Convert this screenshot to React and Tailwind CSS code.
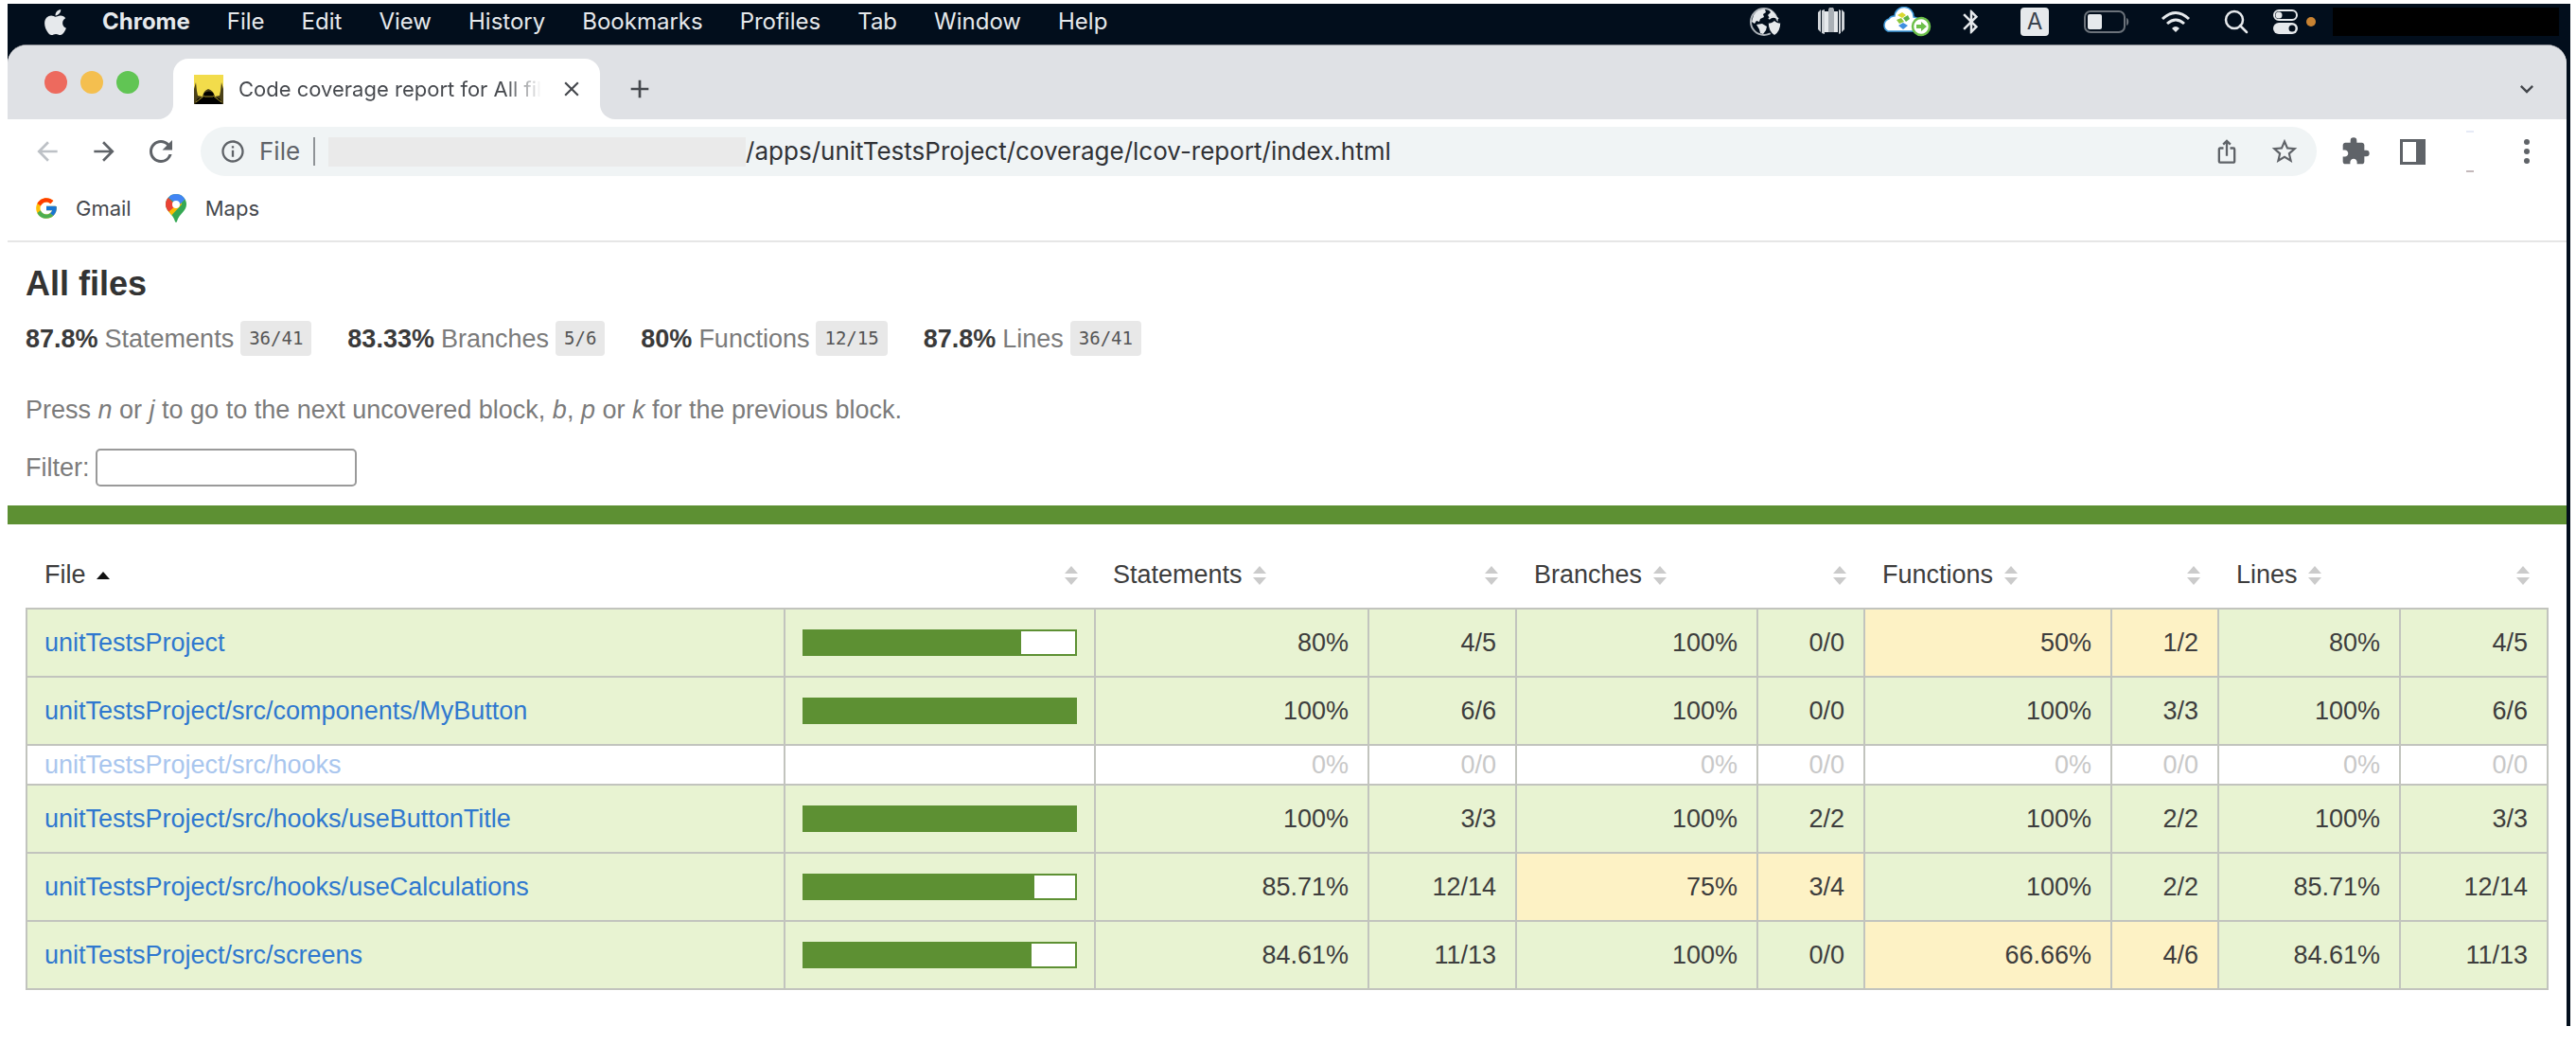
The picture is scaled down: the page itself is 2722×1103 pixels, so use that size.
import { FaApple } from "react-icons/fa";
import { MdArrowBack, MdArrowForward, MdRefresh, MdInfoOutline, MdClose, MdAdd, MdExtension, MdStarOutline, MdIosShare, MdKeyboardArrowDown, MdBluetooth } from "react-icons/md";
import { FcGoogle } from "react-icons/fc";

const MENUS = ["File", "Edit", "View", "History", "Bookmarks", "Profiles", "Tab", "Window", "Help"];

const SUMMARY = [
  ["87.8%", "Statements", "36/41"],
  ["83.33%", "Branches", "5/6"],
  ["80%", "Functions", "12/15"],
  ["87.8%", "Lines", "36/41"],
];

const COLUMNS = [
  { label: "Statements", pct: "w-[289px]", abs: "w-[156px]" },
  { label: "Branches", pct: "w-[255px]", abs: "w-[113px]" },
  { label: "Functions", pct: "w-[261px]", abs: "w-[113px]" },
  { label: "Lines", pct: "w-[192px]", abs: "w-[156px]" },
];

const ROWS = [
  { file: "unitTestsProject", pct: 80, cells: [["80%", "4/5"], ["100%", "0/0"], ["50%", "1/2", true], ["80%", "4/5"]] },
  { file: "unitTestsProject/src/components/MyButton", pct: 100, cells: [["100%", "6/6"], ["100%", "0/0"], ["100%", "3/3"], ["100%", "6/6"]] },
  { file: "unitTestsProject/src/hooks", empty: true, cells: [["0%", "0/0"], ["0%", "0/0"], ["0%", "0/0"], ["0%", "0/0"]] },
  { file: "unitTestsProject/src/hooks/useButtonTitle", pct: 100, cells: [["100%", "3/3"], ["100%", "2/2"], ["100%", "2/2"], ["100%", "3/3"]] },
  { file: "unitTestsProject/src/hooks/useCalculations", pct: 85, cells: [["85.71%", "12/14"], ["75%", "3/4", true], ["100%", "2/2"], ["85.71%", "12/14"]] },
  { file: "unitTestsProject/src/screens", pct: 84, cells: [["84.61%", "11/13"], ["100%", "0/0"], ["66.66%", "4/6", true], ["84.61%", "11/13"]] },
];

function Globe() {
  return (
    <svg viewBox="0 0 34 32" className="h-8 w-[34px] shrink-0">
      <circle cx="15" cy="16" r="14" fill="none" stroke="#aeb4ba" strokeWidth="2" />
      <path d="M4 9C7 4 12 2 16 3l1 3-3 2 1 3-4 2-1 3-3-1-2 3-3-2zM20 3c4 1 7 4 8 8l-4-1-3 2-2-3 3-3zM7 19l6-1 5 3-1 4-3 4-3-1-1-4z" fill="#e6e9ec" />
      <path d="M26 14c2 2 5 3 7 3 0 7-2 11-7 14-5-3-7-7-7-14 2 0 5-1 7-3z" fill="#e6e9ec" stroke="#020e1c" strokeWidth="1.5" />
      <path d="M20 13c3-3 7-3 10 0" fill="none" stroke="#e6e9ec" strokeWidth="2" />
    </svg>
  );
}

function Stripes() {
  return (
    <svg viewBox="0 0 28 32" className="h-8 w-7 shrink-0">
      <path d="M0 6l3-3v24l-3-3zM4 4l3-1v26l-3-1zM22 3l2 1v24l-2 1zM25 3l3 3v18l-3 3z" fill="#cfd3d7" />
      <path d="M7 5h4v22H7zM17 5h4v22h-4z" fill="#e6e9ec" />
      <path d="M11 3l1-2h4l1 2v24h-6z" fill="#aab0b6" />
    </svg>
  );
}

function Cloud() {
  return (
    <svg viewBox="0 0 54 32" className="h-8 w-[54px] shrink-0">
      <path d="M8 26a7 7 0 0 1 1-13 6 6 0 0 1 6-3 10 10 0 0 1 20 1 8 8 0 0 1 3 15z" fill="#fff" stroke="#3f9bdc" strokeWidth="1.5" />
      <path d="M18 9l5-3 4 3-4 3z" fill="#d9d92f" />
      <path d="M24 12l5-3 2 4-4 3z" fill="#5db346" />
      <path d="M17 14l5-2 3 4-5 2z" fill="#8cc63f" />
      <path d="M19 20l5-3 5 3-5 4z" fill="#3f8fe0" />
      <circle cx="43" cy="21" r="9" fill="#fff" stroke="#6cc04a" strokeWidth="2.5" />
      <path d="M38 19h5v-3l6 5-6 5v-3h-5z" fill="#6cc04a" />
    </svg>
  );
}

function Battery() {
  return (
    <svg viewBox="0 0 48 24" className="h-6 w-12 shrink-0">
      <rect x="1" y="1" width="42" height="22" rx="6" fill="none" stroke="#6b727a" strokeWidth="2" />
      <rect x="4" y="4" width="15" height="16" rx="2" fill="#e6e9ec" />
      <path d="M45 8c3 1 3 7 0 8z" fill="#6b727a" />
    </svg>
  );
}

function WifiIcon() {
  return (
    <svg viewBox="0 0 32 24" className="h-6 w-8 shrink-0" fill="none" stroke="#e6e9ec" strokeWidth="3">
      <path d="M2 9Q16-4 30 9M7 14q9-8 18 0" />
      <path d="M12 19q4-4 8 0l-4 4z" fill="#e6e9ec" stroke="none" />
    </svg>
  );
}

function Magnifier() {
  return (
    <svg viewBox="0 0 26 26" className="h-[26px] w-[26px] shrink-0" fill="none" stroke="#e6e9ec" strokeWidth="2.5">
      <circle cx="11" cy="11" r="9" />
      <path d="M17 17l7 7" strokeLinecap="round" />
    </svg>
  );
}

function ControlCenter() {
  return (
    <svg viewBox="0 0 28 28" className="h-7 w-7 shrink-0">
      <rect x="2" y="2" width="24" height="10" rx="5" fill="none" stroke="#e6e9ec" strokeWidth="2" />
      <circle cx="7" cy="7" r="3.500" fill="#e6e9ec" />
      <rect x="1" y="15" width="26" height="12" rx="6" fill="#e6e9ec" />
      <circle cx="21" cy="21" r="3.500" fill="#020e1c" />
    </svg>
  );
}

function Favicon() {
  return (
    <svg viewBox="0 0 31 31" className="h-[31px] w-[31px] shrink-0">
      <rect width="31" height="31" fill="#f2dc4b" />
      <path d="M0 31V15l2-7 1 9 1 5 5 1q1-6 6-8 6 2 7 8l5-1 1-5 1-9 2 7v16z" fill="#4a4018" />
      <path d="M1 31l3-6 5-1 2-5q5-3 9 0l2 5 5 1 3 6z" fill="#000" />
      <path d="M2 29l9-7M29 29l-9-7M11 23h9" stroke="#a08f2c" strokeWidth="1" />
    </svg>
  );
}

function MapsPin() {
  return (
    <svg viewBox="0 0 22 30" className="h-[30px] w-[22px] shrink-0">
      <defs>
        <clipPath id="pin">
          <path d="M11 0a11 11 0 0 1 11 11c0 7-8 10-10 18q-1 2-2 0C8 21 0 18 0 11A11 11 0 0 1 11 0z" />
        </clipPath>
      </defs>
      <g clipPath="url(#pin)">
        <rect width="22" height="30" fill="#34a853" />
        <path d="M0 18L15 3l2 8L4 25z" fill="#fbbc04" />
        <path d="M0 0L3 4l8 8-8 7-3-3z" fill="#ea4335" />
        <path d="M3 4L6 0h16v4l-8 8z" fill="#4285f4" />
      </g>
      <circle cx="11" cy="11" r="4" fill="#fff" />
    </svg>
  );
}

function Sorter({ active }) {
  return (
    <svg viewBox="0 0 14 20" className="inline-block h-5 w-[14px] align-[-2px]">
      {active ? <path d="M0 14l7-8 7 8z" fill="#111" /> : <path d="M0 8l7-8 7 8zM0 12h14l-7 8z" fill="#cbcbcb" />}
    </svg>
  );
}

function MenuBar() {
  return (
    <div className="flex h-[43px] items-center bg-[#020e1c] pr-3 pb-[5px] pl-[37px] text-[24px] text-[#e6e9ec]">
      <FaApple className="h-[31px] w-[27px] shrink-0" />
      <nav className="ml-[36px] flex gap-[39px] leading-7">
        <button type="button" className="font-bold">Chrome</button>
        {MENUS.map((m) => (
          <button type="button" key={m}>{m}</button>
        ))}
      </nav>
      <div className="ml-auto flex items-center">
        <Globe />
        <span className="ml-[38px] flex"><Stripes /></span>
        <span className="ml-[38px] flex"><Cloud /></span>
        <MdBluetooth className="ml-[27px] h-[30px] w-[30px]" />
        <span className="ml-[37px] flex h-[30px] w-[30px] items-center justify-center rounded-[4px] bg-[#e6e9ec] leading-none text-[#3a434e]">A</span>
        <span className="ml-[37px] flex"><Battery /></span>
        <span className="ml-[33px] flex"><WifiIcon /></span>
        <span className="ml-[35px] flex"><Magnifier /></span>
        <span className="ml-[25px] flex"><ControlCenter /></span>
        <span className="ml-2 h-[10px] w-[10px] rounded-full bg-[#c98332]" />
        <span className="ml-[18px] h-[30px] w-[239px] bg-black" />
      </div>
    </div>
  );
}

function TabStrip() {
  return (
    <div className="flex h-[78px] items-end bg-[#dfe1e5] pl-[39px]">
      <div className="flex h-full items-center gap-[14px]">
        <span className="h-6 w-6 rounded-full bg-[#ed6a5e]" />
        <span className="h-6 w-6 rounded-full bg-[#f4bf4f]" />
        <span className="h-6 w-6 rounded-full bg-[#61c554]" />
      </div>
      <div className="ml-[20px] h-4 w-4 bg-white"><div className="h-4 w-4 rounded-br-2xl bg-[#dfe1e5]" /></div>
      <div className="flex h-16 w-[451px] items-center rounded-t-2xl bg-white pr-[17px] pl-[22px]">
        <Favicon />
        <span className="ml-4 bg-gradient-to-r from-[#45484d] from-88% to-[#ffffff] bg-clip-text text-[22px] leading-8 whitespace-nowrap text-transparent">Code coverage report for All fil</span>
        <button type="button" aria-label="Close tab" className="ml-auto text-[#45484d]"><MdClose className="h-[26px] w-[26px]" /></button>
      </div>
      <div className="h-4 w-4 bg-white"><div className="h-4 w-4 rounded-bl-2xl bg-[#dfe1e5]" /></div>
      <button type="button" aria-label="New tab" className="mb-4 ml-[10px] text-[#45484d]"><MdAdd className="h-8 w-8" /></button>
      <button type="button" aria-label="Search tabs" className="mr-[28px] mb-[18px] ml-auto text-[#45484d]"><MdKeyboardArrowDown className="h-7 w-7" /></button>
    </div>
  );
}

function Toolbar() {
  return (
    <div className="flex items-center pt-2 pr-[26px] pl-[26px] text-[#5f6368]">
      <button type="button" aria-label="Back" className="text-[#bdc1c6]"><MdArrowBack className="h-8 w-8" /></button>
      <button type="button" aria-label="Forward" className="ml-7"><MdArrowForward className="h-8 w-8" /></button>
      <button type="button" aria-label="Reload" className="ml-[26px]"><MdRefresh className="h-9 w-9" /></button>
      <div className="ml-[24px] flex h-[52px] flex-1 items-center rounded-full bg-[#f0f4f5] pr-[18px] pl-5 text-[26px] leading-8">
        <MdInfoOutline className="h-7 w-7" />
        <span className="ml-[14px]">File</span>
        <span className="ml-[14px] h-[30px] w-[2px] bg-[#8f9397]" />
        <span className="ml-[14px] h-[31px] w-[441px] bg-[#eaeaea]" />
        <span className="text-[#303236]">/apps/unitTestsProject/coverage/lcov-report/index.html</span>
        <button type="button" aria-label="Share" className="ml-auto"><MdIosShare className="h-7 w-7" /></button>
        <button type="button" aria-label="Bookmark" className="ml-[31px]"><MdStarOutline className="h-8 w-8" /></button>
      </div>
      <button type="button" aria-label="Extensions" className="ml-[25px]"><MdExtension className="h-8 w-8" /></button>
      <button type="button" aria-label="Side panel" className="ml-[31px] h-[27px] w-[27px] border-3 border-r-[10px] border-[#5f6368]" />
      <span className="ml-[43px] flex h-11 w-[8px] flex-col justify-between"><i className="h-[2px] bg-[#e6eaf6]" /><i className="h-[2px] bg-[#c4b9bb]" /></span>
      <button type="button" aria-label="Menu" className="ml-[40px]">
        <svg viewBox="0 0 32 32" className="h-8 w-8" fill="#5f6368">
          <circle cx="16" cy="6" r="3" />
          <circle cx="16" cy="16" r="3" />
          <circle cx="16" cy="26" r="3" />
        </svg>
      </button>
    </div>
  );
}

function Bookmarks() {
  return (
    <div className="flex h-[70px] items-center border-b-2 border-[#e6e6e6] pl-[28px] text-[22px] leading-8 text-[#45484d]">
      <a href="#gmail" className="flex items-center"><FcGoogle className="h-[26px] w-[26px]" /><span className="ml-[18px]">Gmail</span></a>
      <a href="#maps" className="ml-9 flex items-center"><MapsPin /><span className="ml-5">Maps</span></a>
    </div>
  );
}

function Summary() {
  return (
    <header className="px-[19px] pt-[22px] pb-5 text-[27px] leading-9 text-[#7b7b7b]">
      <h1 className="text-[36px] leading-[44px] font-bold text-[#333]">All files</h1>
      <div className="mt-[17px] flex gap-[38px]">
        {SUMMARY.map(([pct, label, frac]) => (
          <div key={label} className="flex items-center gap-[7px]">
            <strong className="text-[#3a3a3a]">{pct}</strong>
            <span>{label}</span>
            <span className="rounded-[4px] bg-[#e8e8e8] px-[9px] font-['DejaVu_Sans_Mono',monospace] text-[19px] leading-[37px] text-[#555]">{frac}</span>
          </div>
        ))}
      </div>
      <p className="mt-[39px]">
        Press <em>n</em> or <em>j</em> to go to the next uncovered block, <em>b</em>, <em>p</em> or <em>k</em> for the previous block.
      </p>
      <div className="mt-[23px] flex items-center gap-[6px]">
        <label htmlFor="filter">Filter:</label>
        <input id="filter" type="search" className="h-10 w-[276px] rounded-[5px] border-2 border-[#9a9a9a] bg-white px-2" />
      </div>
    </header>
  );
}

function CoverageTable() {
  return (
    <table className="w-full table-fixed border-collapse text-[27px] leading-9 text-[#3d3d3d]">
      <thead>
        <tr className="h-[72px] text-left font-normal whitespace-nowrap">
          <th className="px-[19px] font-normal">File <span className="ml-1"><Sorter active /></span></th>
          <th className="w-[328px] px-[18px] text-right font-normal"><Sorter /></th>
          {COLUMNS.flatMap((c) => [
            <th key={c.label} className={`${c.pct} px-[19px] font-normal`}>{c.label} <span className="ml-1"><Sorter /></span></th>,
            <th key={c.label + "-n"} className={`${c.abs} px-[19px] text-right font-normal`}><Sorter /></th>,
          ])}
        </tr>
      </thead>
      <tbody>
        {ROWS.map((r) => (
          <tr key={r.file} className={r.empty ? "h-[42px] bg-white text-[#c8c8c8]" : "h-[72px] bg-[#e8f3d2]"}>
            <td className="border-2 border-[#c2c4be] px-[18px] py-0"><a href={"#" + r.file} className={r.empty ? "text-[#a9c6ee]" : "text-[#2f78cf]"}>{r.file}</a></td>
            <td className="border-2 border-[#c2c4be] px-[18px] py-0">
              {!r.empty && (
                <div className="h-7 border-2 border-[#5d9033] bg-white">
                  <div className="h-full bg-[#5d9033]" style={{ width: r.pct + "%" }} />
                </div>
              )}
            </td>
            {r.cells.flatMap(([p, n, medium], i) => {
              const cls = medium
                ? "border-2 border-[#c2c4be] bg-[#fdf2c5] px-5 py-0 text-right"
                : "border-2 border-[#c2c4be] px-5 py-0 text-right";
              return [
                <td key={i} className={cls}>{p}</td>,
                <td key={i + "n"} className={cls}>{n}</td>,
              ];
            })}
          </tr>
        ))}
      </tbody>
    </table>
  );
}

export default function App() {
  return (
    <div className="min-h-screen bg-white pt-1 pr-[6px] pl-2 font-[Inter,sans-serif]">
      <MenuBar />
      <div className="bg-[#020e1c] pr-1">
        <div className="overflow-hidden rounded-t-[20px] border-t border-[#8b8d93] bg-white pb-[38px]">
          <TabStrip />
          <Toolbar />
          <Bookmarks />
          <main className="font-['Liberation_Sans',Arial,sans-serif]">
            <Summary />
            <div className="h-5 bg-[#5d9033]" />
            <div className="px-[19px] pt-[17px]">
              <CoverageTable />
            </div>
          </main>
        </div>
      </div>
    </div>
  );
}
